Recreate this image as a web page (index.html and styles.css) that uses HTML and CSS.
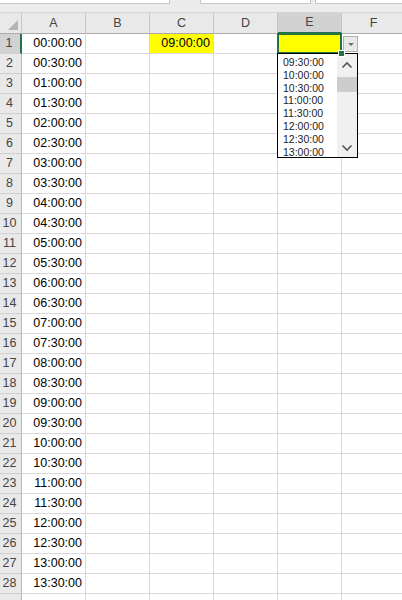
FILE: index.html
```html
<!DOCTYPE html>
<html>
<head>
<meta charset="utf-8">
<link rel="stylesheet" href="styles.css">
</head>
<body>
<div class="topbar">
  <div class="tab t1"></div>
  <div class="tab t2"></div>
  <div class="tab t3"></div>
</div>
<div class="sheet">
  <div class="row head">
    <div class="corner"><span class="tri"></span></div>
    <div class="ch">A</div><div class="ch">B</div><div class="ch">C</div><div class="ch">D</div><div class="ch sel">E</div><div class="ch">F</div>
  </div>
  <div class="row">
    <div class="rh sel">1</div><div class="c">00:00:00</div><div class="c"></div><div class="c yellow">09:00:00</div><div class="c"></div>
    <div class="c yellow active">
      <span class="handle"></span>
      <span class="ddbtn"><svg width="8" height="5" viewBox="0 0 8 5"><path d="M1 1h6L4 4z" fill="#6d6d6d"/></svg></span>
      <div class="ddlist">
        <div class="items">
          <div>09:30:00</div><div>10:00:00</div><div>10:30:00</div><div>11:00:00</div><div>11:30:00</div><div>12:00:00</div><div>12:30:00</div><div>13:00:00</div>
        </div>
        <div class="vscroll">
          <svg class="up" width="12" height="8" viewBox="0 0 12 8"><path d="M1.5 6.5L6 2l4.5 4.5" fill="none" stroke="#555" stroke-width="1.6"/></svg>
          <div class="thumb"></div>
          <svg class="down" width="12" height="8" viewBox="0 0 12 8"><path d="M1.5 1.5L6 6l4.5-4.5" fill="none" stroke="#555" stroke-width="1.6"/></svg>
        </div>
      </div>
    </div>
    <div class="c"></div>
  </div>
  <div class="row"><div class="rh">2</div><div class="c">00:30:00</div><div class="c"></div><div class="c"></div><div class="c"></div><div class="c"></div><div class="c"></div></div>
  <div class="row"><div class="rh">3</div><div class="c">01:00:00</div><div class="c"></div><div class="c"></div><div class="c"></div><div class="c"></div><div class="c"></div></div>
  <div class="row"><div class="rh">4</div><div class="c">01:30:00</div><div class="c"></div><div class="c"></div><div class="c"></div><div class="c"></div><div class="c"></div></div>
  <div class="row"><div class="rh">5</div><div class="c">02:00:00</div><div class="c"></div><div class="c"></div><div class="c"></div><div class="c"></div><div class="c"></div></div>
  <div class="row"><div class="rh">6</div><div class="c">02:30:00</div><div class="c"></div><div class="c"></div><div class="c"></div><div class="c"></div><div class="c"></div></div>
  <div class="row"><div class="rh">7</div><div class="c">03:00:00</div><div class="c"></div><div class="c"></div><div class="c"></div><div class="c"></div><div class="c"></div></div>
  <div class="row"><div class="rh">8</div><div class="c">03:30:00</div><div class="c"></div><div class="c"></div><div class="c"></div><div class="c"></div><div class="c"></div></div>
  <div class="row"><div class="rh">9</div><div class="c">04:00:00</div><div class="c"></div><div class="c"></div><div class="c"></div><div class="c"></div><div class="c"></div></div>
  <div class="row"><div class="rh">10</div><div class="c">04:30:00</div><div class="c"></div><div class="c"></div><div class="c"></div><div class="c"></div><div class="c"></div></div>
  <div class="row"><div class="rh">11</div><div class="c">05:00:00</div><div class="c"></div><div class="c"></div><div class="c"></div><div class="c"></div><div class="c"></div></div>
  <div class="row"><div class="rh">12</div><div class="c">05:30:00</div><div class="c"></div><div class="c"></div><div class="c"></div><div class="c"></div><div class="c"></div></div>
  <div class="row"><div class="rh">13</div><div class="c">06:00:00</div><div class="c"></div><div class="c"></div><div class="c"></div><div class="c"></div><div class="c"></div></div>
  <div class="row"><div class="rh">14</div><div class="c">06:30:00</div><div class="c"></div><div class="c"></div><div class="c"></div><div class="c"></div><div class="c"></div></div>
  <div class="row"><div class="rh">15</div><div class="c">07:00:00</div><div class="c"></div><div class="c"></div><div class="c"></div><div class="c"></div><div class="c"></div></div>
  <div class="row"><div class="rh">16</div><div class="c">07:30:00</div><div class="c"></div><div class="c"></div><div class="c"></div><div class="c"></div><div class="c"></div></div>
  <div class="row"><div class="rh">17</div><div class="c">08:00:00</div><div class="c"></div><div class="c"></div><div class="c"></div><div class="c"></div><div class="c"></div></div>
  <div class="row"><div class="rh">18</div><div class="c">08:30:00</div><div class="c"></div><div class="c"></div><div class="c"></div><div class="c"></div><div class="c"></div></div>
  <div class="row"><div class="rh">19</div><div class="c">09:00:00</div><div class="c"></div><div class="c"></div><div class="c"></div><div class="c"></div><div class="c"></div></div>
  <div class="row"><div class="rh">20</div><div class="c">09:30:00</div><div class="c"></div><div class="c"></div><div class="c"></div><div class="c"></div><div class="c"></div></div>
  <div class="row"><div class="rh">21</div><div class="c">10:00:00</div><div class="c"></div><div class="c"></div><div class="c"></div><div class="c"></div><div class="c"></div></div>
  <div class="row"><div class="rh">22</div><div class="c">10:30:00</div><div class="c"></div><div class="c"></div><div class="c"></div><div class="c"></div><div class="c"></div></div>
  <div class="row"><div class="rh">23</div><div class="c">11:00:00</div><div class="c"></div><div class="c"></div><div class="c"></div><div class="c"></div><div class="c"></div></div>
  <div class="row"><div class="rh">24</div><div class="c">11:30:00</div><div class="c"></div><div class="c"></div><div class="c"></div><div class="c"></div><div class="c"></div></div>
  <div class="row"><div class="rh">25</div><div class="c">12:00:00</div><div class="c"></div><div class="c"></div><div class="c"></div><div class="c"></div><div class="c"></div></div>
  <div class="row"><div class="rh">26</div><div class="c">12:30:00</div><div class="c"></div><div class="c"></div><div class="c"></div><div class="c"></div><div class="c"></div></div>
  <div class="row"><div class="rh">27</div><div class="c">13:00:00</div><div class="c"></div><div class="c"></div><div class="c"></div><div class="c"></div><div class="c"></div></div>
  <div class="row"><div class="rh">28</div><div class="c">13:30:00</div><div class="c"></div><div class="c"></div><div class="c"></div><div class="c"></div><div class="c"></div></div>
  <div class="row"><div class="rh"></div><div class="c"></div><div class="c"></div><div class="c"></div><div class="c"></div><div class="c"></div><div class="c"></div></div>
</div>
</body>
</html>
```
FILE: styles.css
```css
html, body {
  margin: 0;
  padding: 0;
  background: #fff;
  overflow: hidden;
  width: 402px;
  height: 600px;
}
body {
  font-family: "Liberation Sans", Arial, sans-serif;
  color: #000;
}
.topbar {
  height: 13px;
  background: #ececec;
  display: flex;
  align-items: flex-start;
  box-sizing: border-box;
  border-bottom: 1px solid #d6d6d6;
}
.tab {
  height: 4px;
  background: #fff;
  border: 1px solid #c8c8c8;
  border-top: none;
  box-sizing: border-box;
}
.t1 { width: 170px; border-left: none; }
.t2 { width: 111px; margin-left: 30px; }
.t3 { flex: 1; margin-left: 4px; border-right: none; }

.sheet {
  display: flex;
  flex-direction: column;
  width: 410px;
}
.row {
  display: grid;
  grid-template-columns: 22px repeat(6, 64px);
  height: 20px;
}
.row > div {
  box-sizing: border-box;
  border-right: 1px solid #d9d9d9;
  border-bottom: 1px solid #d9d9d9;
}
.head { height: 21px; }
.head > div {
  background: #e9e9e9;
  border-right: 1px solid #c6c6c6;
  border-bottom: 1px solid #ababab;
  font-size: 12.5px;
  color: #444;
  text-align: center;
  line-height: 20px;
}
.head > .sel {
  background: #d2d2d2;
  border-bottom: 2px solid #217346;
  line-height: 19px;
}
.corner {
  position: relative;
}
.tri {
  position: absolute;
  right: 3px;
  bottom: 3px;
  width: 0;
  height: 0;
  border-left: 10px solid transparent;
  border-bottom: 10px solid #b4b4b4;
}
.row > .rh {
  background: #e9e9e9;
  border-right: 1px solid #b8b8b8;
  border-bottom: 1px solid #d0d0d0;
  font-size: 12.5px;
  color: #444;
  text-align: center;
  line-height: 19px;
  padding-right: 2px;
}
.row > .rh.sel {
  background: #d2d2d2;
  border-right: 2px solid #217346;
}
.c {
  font-size: 12.5px;
  line-height: 19px;
  text-align: right;
  padding-right: 3px;
  white-space: nowrap;
}
.yellow { background: #ffff00; }
.active {
  position: relative;
}
.active::after {
  content: "";
  position: absolute;
  left: -1px;
  top: -1px;
  right: -1px;
  bottom: -1px;
  border: 2px solid #217346;
  pointer-events: none;
}
.handle {
  position: absolute;
  right: -4px;
  bottom: -4px;
  width: 5px;
  height: 5px;
  background: #217346;
  border: 1px solid #fff;
  z-index: 3;
}
.ddbtn {
  position: absolute;
  left: 65px;
  top: 2px;
  width: 15px;
  height: 16px;
  box-sizing: border-box;
  background: #e8e8e8;
  border: 1px solid #b0b0b0;
  display: flex;
  align-items: center;
  justify-content: center;
}
.ddlist {
  position: absolute;
  left: -1px;
  top: 19px;
  width: 81px;
  height: 105px;
  box-sizing: border-box;
  background: #fff;
  border: 1px solid #000;
  display: flex;
  z-index: 2;
  text-align: left;
}
.items {
  flex: 1;
  padding: 2px 0 0 5px;
  font-size: 10.5px;
  line-height: 12.8px;
  color: #222;
}
.vscroll {
  width: 20px;
  background: #f0f0f0;
  display: flex;
  flex-direction: column;
  align-items: center;
}
.vscroll .up {
  margin-top: 7px;
}
.thumb {
  width: 20px;
  height: 15px;
  margin-top: 8px;
  background: #cdcdcd;
}
.vscroll .down {
  margin-top: auto;
  margin-bottom: 5px;
}
```
